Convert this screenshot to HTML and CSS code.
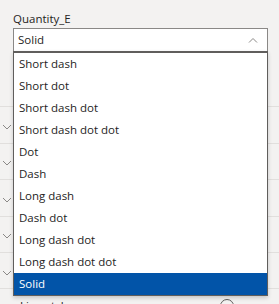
FILE: index.html
```html
<!DOCTYPE html>
<html>
<head>
<meta charset="utf-8">
<link rel="stylesheet" href="styles.css">
</head>
<body>
<div class="pane">
  <div class="label">Quantity_E</div>
  <div class="select">
    <span class="value">Solid</span>
    <svg class="caret" width="10" height="6" viewBox="0 0 10 6"><path d="M1 5.5 L5 1.5 L9 5.5" fill="none" stroke="#8a8886" stroke-width="1"/></svg>
  </div>
  <div class="rows">
    <div class="row"></div>
    <div class="row"><svg class="chev" width="10" height="7" viewBox="0 0 10 7"><path d="M1 1 L5 5 L9 1" fill="none" stroke="#8a8886" stroke-width="1"/></svg></div>
    <div class="row"><svg class="chev" width="10" height="7" viewBox="0 0 10 7"><path d="M1 1 L5 5 L9 1" fill="none" stroke="#8a8886" stroke-width="1"/></svg></div>
    <div class="row"><svg class="chev" width="10" height="7" viewBox="0 0 10 7"><path d="M1 1 L5 5 L9 1" fill="none" stroke="#8a8886" stroke-width="1"/></svg></div>
    <div class="row"><svg class="chev" width="10" height="7" viewBox="0 0 10 7"><path d="M1 1 L5 5 L9 1" fill="none" stroke="#8a8886" stroke-width="1"/></svg></div>
    <div class="row"><svg class="chev" width="10" height="7" viewBox="0 0 10 7"><path d="M1 1 L5 5 L9 1" fill="none" stroke="#8a8886" stroke-width="1"/></svg></div>
    <div class="tail"><span>Line style</span><span class="toggle"></span></div>
  </div>
  <ul class="menu">
    <li>Short dash</li>
    <li>Short dot</li>
    <li>Short dash dot</li>
    <li>Short dash dot dot</li>
    <li>Dot</li>
    <li>Dash</li>
    <li>Long dash</li>
    <li>Dash dot</li>
    <li>Long dash dot</li>
    <li>Long dash dot dot</li>
    <li class="selected">Solid</li>
  </ul>
</div>
</body>
</html>
```

FILE: styles.css
```css
html, body {
  margin: 0;
  padding: 0;
  background: #f3f2f1;
  overflow: hidden;
  width: 279px;
  height: 304px;
}
.pane {
  position: relative;
  font-family: "Open Sans", "Noto Sans", sans-serif;
  font-size: 11.5px;
  color: #252423;
}
.label {
  padding: 10px 0 0 13px;
  height: 18px;
  line-height: 18px;
}
.select {
  margin: 0 11px 0 13px;
  height: 22px;
  border: 1px solid #8a8886;
  background: #fff;
  display: flex;
  align-items: center;
  justify-content: space-between;
  padding: 0 9px 0 4px;
}
.value {
  line-height: 22px;
}
.caret {
  display: block;
}
.rows {
  margin-top: 19px;
}
.row {
  height: 35.4px;
  border-bottom: 1px solid #e1dfdd;
  display: flex;
  align-items: center;
  padding-left: 2px;
  box-sizing: content-box;
}
.chev {
  display: block;
  margin-top: 5px;
}
.tail {
  display: flex;
  align-items: center;
  padding: 9px 0 0 20px;
  gap: 150px;
}
.toggle {
  width: 12px;
  height: 12px;
  border-radius: 50%;
  border: 1px solid #605e5c;
}
.menu {
  position: absolute;
  top: 51px;
  left: 13px;
  width: 253px;
  margin: 0;
  padding: 0;
  list-style: none;
  background: #fff;
  border: 1px solid #605e5c;
  border-top: 2px solid #605e5c;
  box-shadow: 0 2px 4px rgba(0, 0, 0, 0.18);
}
.menu li {
  height: 22px;
  line-height: 22px;
  padding-left: 5px;
  white-space: nowrap;
}
.menu li.selected {
  background: #0254a8;
  color: #fff;
}
```
